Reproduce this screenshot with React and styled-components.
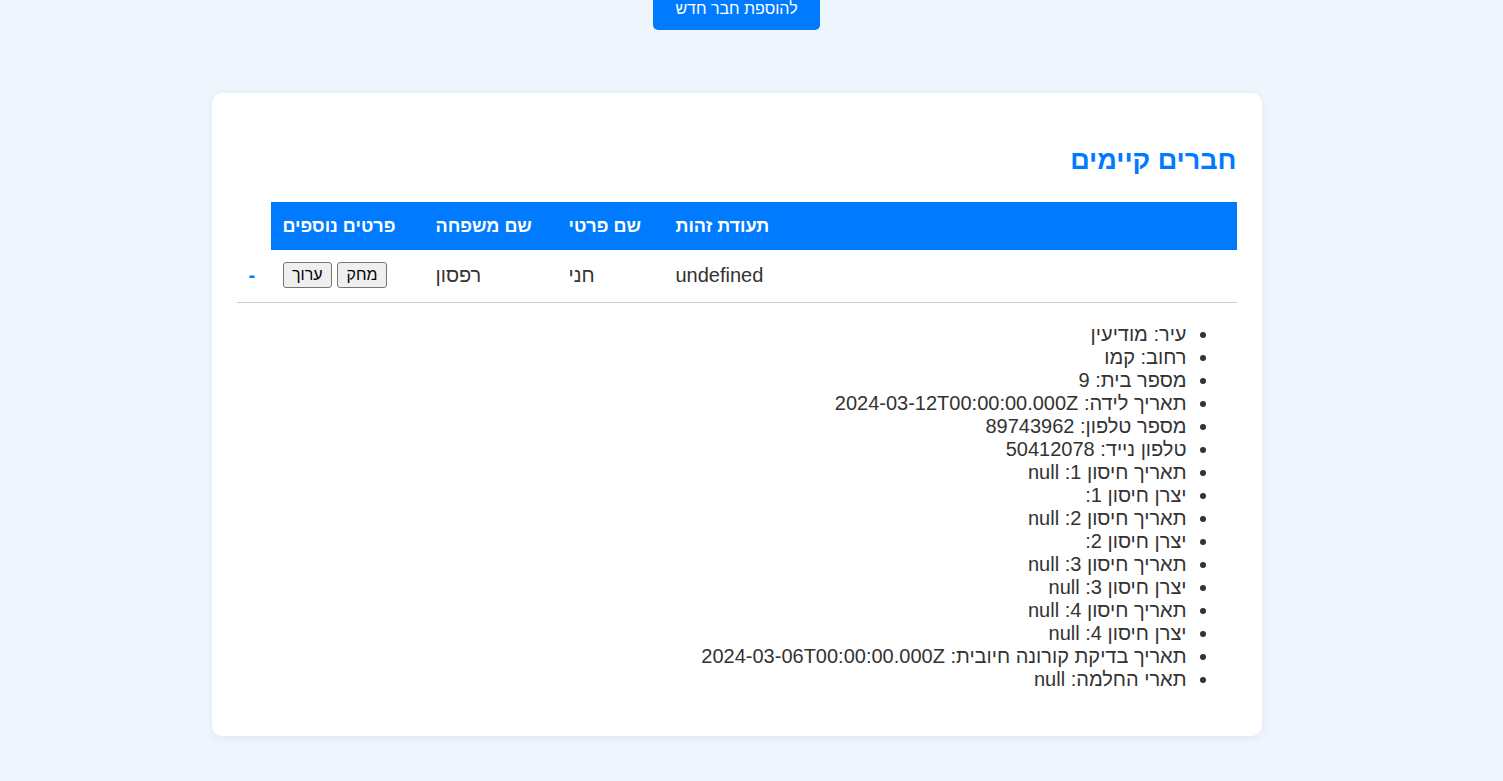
import React from "react";
import styled, { createGlobalStyle } from "styled-components";

const GlobalStyle = createGlobalStyle`
  html, body { margin: 0; padding: 0; }
  body {
    background: #eef5fd;
    font-family: "Liberation Sans", Arial, "Noto Sans", sans-serif;
    color: #333;
  }
`;

const Page = styled.div`
  direction: rtl;
  display: flex;
  flex-direction: column;
  align-items: center;
  margin-top: -12px;
  padding: 0 30px 40px 0;
`;

const AddButton = styled.button`
  font-family: inherit;
  font-size: 16px;
  line-height: 18px;
  padding: 12px 22px;
  background: #007bff;
  color: #fff;
  border: none;
  border-radius: 5px;
  cursor: pointer;
`;

const Card = styled.div`
  box-sizing: border-box;
  width: 1050px;
  margin-top: 63px;
  padding: 25px;
  background: #fff;
  border-radius: 10px;
  box-shadow: 0 2px 10px rgba(0, 0, 0, 0.06);
`;

const Title = styled.h2`
  margin: 27px 0 27px;
  font-size: 27px;
  line-height: 30px;
  font-weight: 700;
  color: #007bff;
`;

const Table = styled.table`
  width: 100%;
  border-collapse: collapse;
  table-layout: fixed;
`;

const Col = styled.col`
  width: ${(p) => p.$w}px;
`;

const Th = styled.th`
  background: #007bff;
  color: #fff;
  font-size: 18px;
  line-height: 24px;
  font-weight: bold;
  padding: 12px;
  text-align: left;
`;

const Row = styled.tr`
  border-bottom: ${(p) => (p.$border ? "1px solid #ccc" : "none")};
`;

const Td = styled.td`
  font-size: 20px;
  line-height: 23px;
  padding: 12px 12px 14px;
  text-align: left;
  vertical-align: middle;
  color: #333;
`;

const DetailsCell = styled.td`
  padding: 12px;
`;

const SmallButton = styled.button`
  font-family: inherit;
  font-size: 16px;
  line-height: 18px;
  padding: 3px 8.5px;
  margin-left: 5px;
  background: #efefef;
  color: #000;
  border: 1px solid #767676;
  border-radius: 3px;
  vertical-align: middle;
  &:last-child { margin-left: 0; }
`;

const Toggle = styled.span`
  color: #007bff;
  font-weight: bold;
  cursor: pointer;
`;

const List = styled.ul`
  margin: 8px 0;
  padding: 0 38px 0 0;
  text-align: right;
`;

const Item = styled.li`
  font-size: 20px;
  line-height: 23px;
  color: #333;
`;

const details = [
  "עיר: מודיעין",
  "רחוב: קמו",
  "מספר בית: 9",
  "תאריך לידה: 2024-03-12T00:00:00.000Z",
  "מספר טלפון: 89743962",
  "טלפון נייד: 50412078",
  "תאריך חיסון 1: null",
  "יצרן חיסון 1: ",
  "תאריך חיסון 2: null",
  "יצרן חיסון 2: ",
  "תאריך חיסון 3: null",
  "יצרן חיסון 3: null",
  "תאריך חיסון 4: null",
  "יצרן חיסון 4: null",
  "תאריך בדיקת קורונה חיובית: 2024-03-06T00:00:00.000Z",
  "תארי החלמה: null",
];

export default function App() {
  return (
    <>
      <GlobalStyle />
      <Page>
        <AddButton>להוספת חבר חדש</AddButton>
        <Card>
          <Title>חברים קיימים</Title>
          <Table>
            <colgroup>
              <Col $w={573} />
              <Col $w={107} />
              <Col $w={133} />
              <Col $w={153} />
              <Col $w={34} />
            </colgroup>
            <thead>
              <tr>
                <Th>תעודת זהות</Th>
                <Th>שם פרטי</Th>
                <Th>שם משפחה</Th>
                <Th>פרטים נוספים</Th>
              </tr>
            </thead>
            <tbody>
              <Row $border>
                <Td>undefined</Td>
                <Td>חני</Td>
                <Td>רפסון</Td>
                <Td>
                  <SmallButton>מחק</SmallButton>
                  <SmallButton>ערוך</SmallButton>
                </Td>
                <Td>
                  <Toggle>-</Toggle>
                </Td>
              </Row>
              <Row>
                <DetailsCell colSpan={5}>
                  <List>
                    {details.map((d, i) => (
                      <Item key={i}>{d}</Item>
                    ))}
                  </List>
                </DetailsCell>
              </Row>
            </tbody>
          </Table>
        </Card>
      </Page>
    </>
  );
}
